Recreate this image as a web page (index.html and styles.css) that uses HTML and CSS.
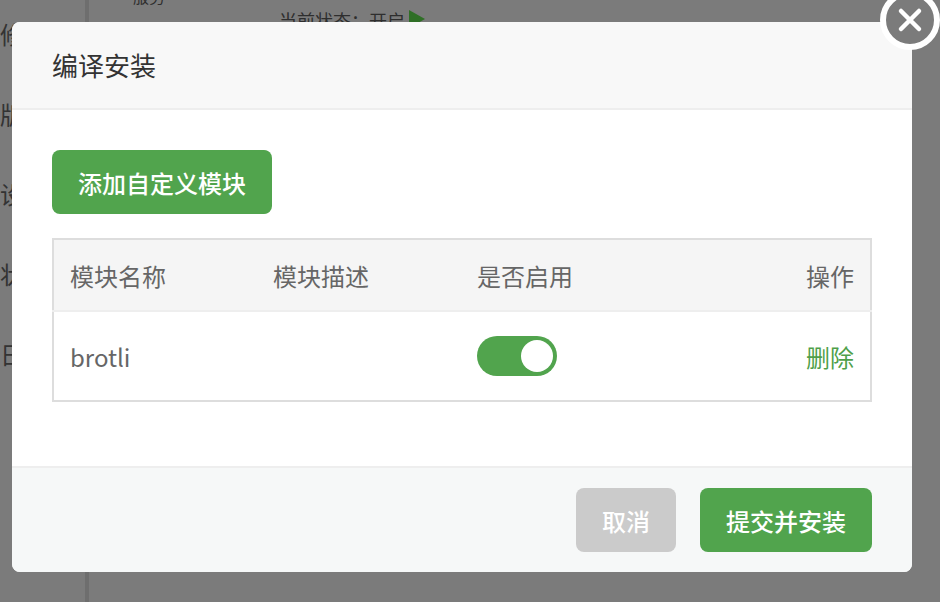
FILE: index.html
```html
<!DOCTYPE html>
<html lang="zh">
<head>
    <meta charset="UTF-8">
    <title>编译安装</title>
    <link rel="stylesheet" href="styles.css">
</head>
<body>

<div class="page">
    <ul class="side-menu">
        <li>修</li>
        <li>版</li>
        <li>设</li>
        <li>状</li>
        <li>日</li>
    </ul>
    <div class="side-line"></div>
    <div class="sub-menu">服务</div>
    <div class="status">当前状态：开启 <span class="status-arrow"></span></div>
</div>

<div class="modal">
    <div class="modal-head">编译安装</div>
    <div class="modal-body">
        <button type="button" class="btn btn-green">添加自定义模块</button>
        <table class="module-table">
            <thead>
                <tr>
                    <th class="col-name">模块名称</th>
                    <th class="col-desc">模块描述</th>
                    <th>是否启用</th>
                    <th class="col-op">操作</th>
                </tr>
            </thead>
            <tbody>
                <tr>
                    <td>brotli</td>
                    <td></td>
                    <td><span class="switch"><span class="switch-dot"></span></span></td>
                    <td class="col-op"><a class="del-link">删除</a></td>
                </tr>
            </tbody>
        </table>
    </div>
    <div class="modal-foot">
        <button type="button" class="btn btn-grey">取消</button>
        <button type="button" class="btn btn-green">提交并安装</button>
    </div>
    <a class="modal-close">
        <svg width="48" height="48" viewBox="0 0 48 48">
            <path d="M15 15L33 33M33 15L15 33" fill="none" stroke="#fff" stroke-width="4.5" stroke-linecap="round"/>
        </svg>
    </a>
</div>

</body>
</html>
```

FILE: styles.css
```css
* {
    box-sizing: border-box;
}
html, body {
    margin: 0;
    height: 100%;
    overflow: hidden;
}
body {
    font-family: "Noto Sans CJK SC", "Noto Sans", sans-serif;
    background-color: #7b7b7b;
    color: #333;
}

/* page behind the dimmed layer */
.page {
    display: flex;
    height: 100%;
    color: #2e2e2e;
}
.side-menu {
    list-style: none;
    margin: 0;
    padding: 14px 0 0 0;
    width: 85px;
    font-size: 24px;
    color: #333;
}
.side-menu li {
    height: 80px;
    line-height: 40px;
}
.side-line {
    width: 4px;
    background-color: #6e6e6e;
}
.sub-menu {
    width: 190px;
    padding: 0 0 0 44px;
    margin-top: -16px;
    font-size: 16px;
    line-height: 24px;
}
.status {
    font-size: 18px;
    line-height: 24px;
    margin-top: 8px;
}
.status-arrow {
    display: inline-block;
    width: 0;
    height: 0;
    border-left: 16px solid #2f6f26;
    border-top: 9px solid transparent;
    border-bottom: 9px solid transparent;
}

.modal {
    position: fixed;
    left: 12px;
    top: 22px;
    width: 900px;
    height: 550px;
    display: flex;
    flex-direction: column;
    background: #fff;
    border-radius: 8px;
}
.modal-head {
    height: 88px;
    padding: 0 40px;
    line-height: 86px;
    font-size: 26px;
    color: #333;
    background: #f8f8f8;
    border-bottom: 2px solid #eee;
    border-radius: 8px 8px 0 0;
}
.modal-body {
    flex: 1;
    padding: 40px 40px 0;
}
.modal-foot {
    height: 106px;
    display: flex;
    justify-content: flex-end;
    gap: 24px;
    padding: 20px 40px 0;
    background: #f6f8f8;
    border-top: 2px solid #eee;
    border-radius: 0 0 8px 8px;
}
.btn {
    height: 64px;
    padding: 0 26px;
    border: none;
    border-radius: 8px;
    color: #fff;
    font-family: inherit;
    font-size: 24px;
    font-weight: 500;
}
.btn-green {
    background-color: #51a44d;
}
.btn-grey {
    background-color: #cbcbcb;
}
.module-table {
    width: 820px;
    margin-top: 24px;
    border-collapse: collapse;
    border: 2px solid #ddd;
    font-size: 24px;
    color: #666;
}
.module-table th {
    height: 72px;
    padding: 0 16px;
    text-align: left;
    font-weight: 400;
    background: #f5f5f5;
    border-bottom: 2px solid #eee;
}
.module-table td {
    height: 90px;
    padding: 0 16px;
}
.module-table .col-name,
.module-table .col-desc {
    width: 204px;
}
.module-table .col-op {
    text-align: right;
}
.del-link {
    color: #4f9f4a;
}
.switch {
    display: block;
    width: 80px;
    height: 40px;
    padding: 4px;
    border-radius: 20px;
    background-color: #51a44d;
}
.switch-dot {
    display: block;
    width: 32px;
    height: 32px;
    margin-left: 40px;
    border-radius: 50%;
    background: #fff;
}
.modal-close {
    position: absolute;
    right: -28px;
    top: -32px;
    width: 60px;
    height: 60px;
    display: flex;
    align-items: center;
    justify-content: center;
    border: 6px solid #fff;
    border-radius: 50%;
    background-color: #7b7b7b;
}
```
